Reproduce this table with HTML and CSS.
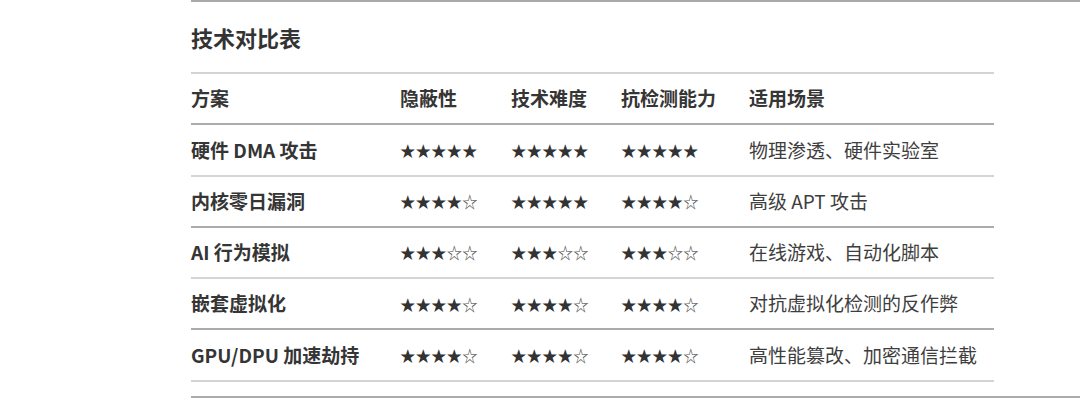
FILE: index.html
```html
<!DOCTYPE html>
<html lang="zh-CN">
<head>
<meta charset="utf-8">
<title>技术对比表</title>
<link rel="stylesheet" href="styles.css">
</head>
<body>
<div class="page">
  <div class="rule-top"></div>
  <h2 class="title">技术对比表</h2>
  <div class="table">
    <div class="row head">
      <div class="cell">方案</div>
      <div class="cell">隐蔽性</div>
      <div class="cell">技术难度</div>
      <div class="cell">抗检测能力</div>
      <div class="cell">适用场景</div>
    </div>
    <div class="row light">
      <div class="cell name">硬件 DMA 攻击</div>
      <div class="cell stars">★★★★★</div>
      <div class="cell stars">★★★★★</div>
      <div class="cell stars">★★★★★</div>
      <div class="cell">物理渗透、硬件实验室</div>
    </div>
    <div class="row dark">
      <div class="cell name">内核零日漏洞</div>
      <div class="cell stars">★★★★<span class="off">☆</span></div>
      <div class="cell stars">★★★★★</div>
      <div class="cell stars">★★★★<span class="off">☆</span></div>
      <div class="cell">高级 APT 攻击</div>
    </div>
    <div class="row light">
      <div class="cell name">AI 行为模拟</div>
      <div class="cell stars">★★★<span class="off">☆☆</span></div>
      <div class="cell stars">★★★<span class="off">☆☆</span></div>
      <div class="cell stars">★★★<span class="off">☆☆</span></div>
      <div class="cell">在线游戏、自动化脚本</div>
    </div>
    <div class="row dark">
      <div class="cell name">嵌套虚拟化</div>
      <div class="cell stars">★★★★<span class="off">☆</span></div>
      <div class="cell stars">★★★★<span class="off">☆</span></div>
      <div class="cell stars">★★★★<span class="off">☆</span></div>
      <div class="cell">对抗虚拟化检测的反作弊</div>
    </div>
    <div class="row light">
      <div class="cell name">GPU/DPU 加速劫持</div>
      <div class="cell stars">★★★★<span class="off">☆</span></div>
      <div class="cell stars">★★★★<span class="off">☆</span></div>
      <div class="cell stars">★★★★<span class="off">☆</span></div>
      <div class="cell">高性能篡改、加密通信拦截</div>
    </div>
  </div>
  <div class="rule-bottom"></div>
</div>
</body>
</html>
```

FILE: styles.css
```css
html, body {
  margin: 0;
  padding: 0;
  background: #ffffff;
}

body {
  font-family: "Noto Sans CJK SC", "Noto Sans", sans-serif;
  color: #3e3e3e;
  font-size: 19px;
}

.page {
  margin-left: 191px;
  width: 889px;
}

.rule-top {
  height: 2px;
  background: #a9a9a9;
}

.title {
  margin: 0;
  height: 70px;
  display: flex;
  align-items: center;
  font-size: 22px;
  font-weight: 700;
  color: #333333;
  line-height: 1;
  box-sizing: border-box;
  padding-bottom: 0;
}

.table {
  width: 803px;
  border-top: 2px solid #d4d4d4;
}

.row {
  display: grid;
  grid-template-columns: 209px 111px 110px 128px 1fr;
  height: 51.3px;
  box-sizing: border-box;
  align-items: center;
}

.row.head,
.row.dark {
  border-bottom: 2px solid #ababab;
}

.row.light {
  border-bottom: 2px solid #d4d4d4;
}

.cell {
  white-space: nowrap;
  line-height: 1.2;
}

.head .cell,
.cell.name {
  font-weight: 700;
  color: #353535;
}

.cell.stars {
  font-family: "Noto Sans CJK SC", sans-serif;
  font-size: 15.5px;
  color: #333333;
}

.off {
  color: #555555;
}

.rule-bottom {
  margin-top: 14px;
  height: 2px;
  background: #ababab;
}
```
